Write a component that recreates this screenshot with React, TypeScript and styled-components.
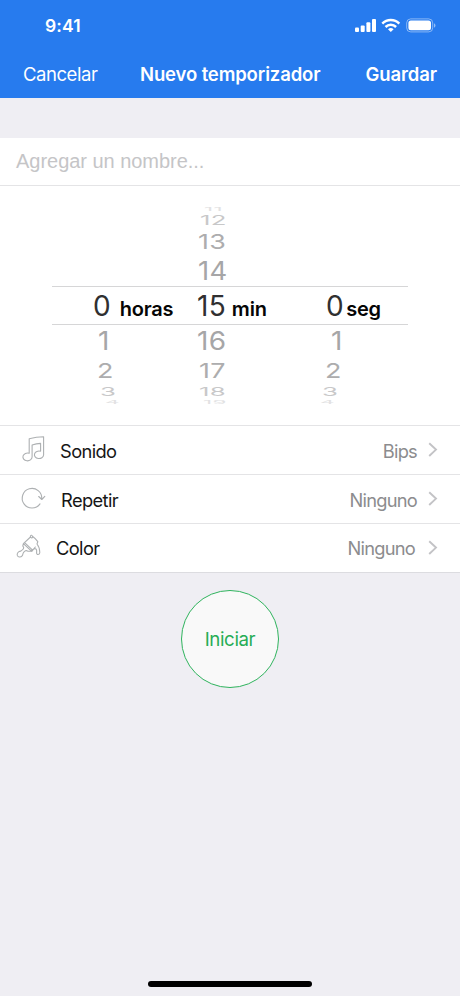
import React from "react";
import styled, { createGlobalStyle } from "styled-components";

const GlobalStyle = createGlobalStyle`
  * { box-sizing: border-box; }
  body { margin: 0; background: #efeef3; font-family: Inter, "Liberation Sans", sans-serif; }
`;

const Screen = styled.main`
  width: 460px;
  height: 996px;
  overflow: hidden;
  display: flex;
  flex-direction: column;
  background: #efeef3;
`;

const Header = styled.header`
  height: 98px;
  background: #277bee;
  color: #fff;
`;

const StatusBar = styled.div`
  height: 50px;
  padding: 1px 24px 0 45px;
  display: flex;
  align-items: center;
  justify-content: space-between;
`;

const Clock = styled.span`
  font-size: 17.5px;
  font-weight: 600;
  letter-spacing: 0.15px;
`;

const NavBar = styled.nav`
  height: 48px;
  padding: 0 23px;
  display: grid;
  grid-template-columns: 117px 1fr auto;
  align-items: center;
`;

const NavText = styled.span<{ $strong?: boolean; $tracking: number }>`
  font-size: 18.5px;
  line-height: 46px;
  padding-bottom: 1px;
  font-weight: ${(p) => (p.$strong ? 600 : 400)};
  letter-spacing: ${(p) => p.$tracking}px;
  white-space: nowrap;
`;

const NameField = styled.div`
  height: 48px;
  margin-top: 40px;
  padding-left: 16px;
  background: #fff;
  border-bottom: 1px solid #e4e4e6;
  color: #c5c5c7;
  font: 20px/47px "Liberation Sans", sans-serif;
  letter-spacing: -0.03px;
`;

const Picker = styled.section`
  height: 239px;
  padding: 21px 52px 0;
  background: #fff;
  display: grid;
  grid-template-columns: 126px 126px 104px;
  grid-template-rows: 197px;
`;

const Wheel = styled.div<{ $upper: boolean }>`
  height: 197px;
  padding-top: ${(p) => (p.$upper ? 0 : 79)}px;
`;

const Notch = styled.div<{ $height: number; $left: number; $selected: boolean; $color: string }>`
  height: ${(p) => p.$height}px;
  padding: ${(p) => (p.$selected ? 1 : 0)}px 0 0 ${(p) => p.$left}px;
  display: flex;
  align-items: center;
  color: ${(p) => p.$color};
  border: 0 solid #d6d6d7;
  border-width: ${(p) => (p.$selected ? "1px 0" : "0")};
`;

const Digits = styled.span<{ $squash: number; $stretch: number }>`
  font-size: 28px;
  font-weight: 400;
  line-height: 1;
  letter-spacing: 0.4px;
  margin-right: -0.4px;
  transform: scale(${(p) => p.$stretch}, ${(p) => p.$squash});
  transform-origin: left center;
`;

const Unit = styled.span<{ $gap: number }>`
  margin-left: ${(p) => p.$gap}px;
  padding-top: 5px;
  color: #050505;
  font-size: 20px;
  line-height: 1;
  font-weight: 600;
  letter-spacing: -0.2px;
`;

const Settings = styled.section`
  height: 148px;
  background: #fff;
  border-bottom: 1px solid #dcdce0;
`;

const SettingRow = styled.div`
  height: 49px;
  display: flex;
  align-items: center;
  padding-right: 21px;
  border-top: 1px solid #e4e4e6;

  &:last-child {
    height: 48px;
  }
`;

const IconSlot = styled.span<{ $width: number }>`
  width: ${(p) => p.$width}px;
  padding-left: 16px;
  display: flex;
`;

const SettingName = styled.span`
  flex: 1;
  padding-top: 1px;
  font-size: 18.3px;
  letter-spacing: -0.6px;
  color: #161616;
`;

const SettingValue = styled.span<{ $gap: number }>`
  margin-right: ${(p) => p.$gap}px;
  padding-top: 1px;
  font-size: 18.3px;
  letter-spacing: -0.75px;
  color: #8c8c8e;
`;

const StartButton = styled.button`
  width: 98px;
  height: 98px;
  margin: 17px auto 0;
  padding: 2px 0 0;
  border: 1.5px solid #2fb35d;
  border-radius: 50%;
  background: #f9f9f9;
  color: #27ad55;
  font: 400 18.7px/1 Inter, sans-serif;
  letter-spacing: -0.4px;
`;

const HomeIndicator = styled.div`
  width: 164px;
  height: 6px;
  margin: auto auto 9px;
  border-radius: 3px;
  background: #000;
`;

const StatusIcons = () => (
  <svg width="82" height="16" viewBox="0 0 82 16" fill="none">
    <g fill="#fff">
      <rect x="1" y="9.6" width="4" height="4.4" rx="1" />
      <rect x="6.7" y="7.4" width="4" height="6.6" rx="1" />
      <rect x="12.4" y="4.2" width="4" height="9.8" rx="1" />
      <rect x="18" y="1" width="4" height="13" rx="1" />
    </g>
    <g stroke="#fff" strokeWidth="2.5">
      <path d="M28.3 5.6a12 12 0 0 1 17 0" />
      <path d="M31.5 9a7.5 7.5 0 0 1 10.6 0" />
    </g>
    <path d="M34 11.2a4.1 4.1 0 0 1 5.6 0L36.8 14Z" fill="#fff" />
    <rect x="52.7" y=".9" width="26" height="13" rx="4" stroke="#fff" strokeOpacity=".45" />
    <rect x="54.4" y="2.6" width="22.6" height="9.6" rx="2.5" fill="#fff" />
    <path d="M80 5.3c2 .8 2 3.6 0 4.4Z" fill="#fff" fillOpacity=".5" />
  </svg>
);

const iconProps = {
  width: 30,
  height: 30,
  viewBox: "0 0 30 30",
  fill: "none",
  stroke: "#adb0b2",
  strokeWidth: 1.1,
  strokeLinecap: "round" as const,
  strokeLinejoin: "round" as const,
};

const MusicIcon = () => (
  <svg {...iconProps}>
    <path d="M13.2 3.7Q20.5 2 27.6 1.8V20a4.6 3.8 0 1 1-3-3.8V8.4q-4.3.3-8.5 1.7V22a4.6 3.9 0 1 1-2.9-3.7Z" />
  </svg>
);

const RepeatIcon = () => (
  <svg {...iconProps}>
    <path d="M24 19.9a9.8 9.8 0 1 1 1.8-5.1M22.7 12.5l3.1 3 3-3.2" />
  </svg>
);

const BrushIcon = () => (
  <svg {...iconProps}>
    <path d="M7.4 10.6 14.5 4c.8 1.5 3.2.7 1.7-1.2-.7-1.2-2.3-.3-1.7 1.2M16.4 3.2c2.2 1.4 3.9 3.5 5.4 5.5L21 11c1.7 2 2.7 5.6 2.8 8.6 0 2.5-3.3 2.6-3.2.2.2-2 .2-4.3-1.8-4.2-1.6 0-2 1.8-3.4 1.7M7.4 10.6l8.4 7.7 3.5-4.3M7.4 10.6 6.8 13c2.2 1.9.1 3.5-2 5.1-2.3.1-4.2 2.2-3.5 4.3.8 2 3.4 2.2 4.8.5.9-1 .6-2.2 1.3-3.2 1.4-1.7 2.9-2.8 4.2-1.5l4.2.1M8.6 9.6l8 7.5" />
  </svg>
);

const Chevron = () => (
  <svg width="12" height="16" viewBox="0 0 12 16" fill="none" stroke="#c3c3c6" strokeWidth="1.9">
    <path d="m2.2 1.2 6.8 6.4-6.8 6.4" />
  </svg>
);

interface Step {
  value: number;
  height: number;
  squash: number;
  stretch: number;
  color: string;
  left: number;
}

const drum = [
  { offset: -4, height: 4, squash: 0.18, stretch: 0.8, color: "#e2e2e3" },
  { offset: -3, height: 17, squash: 0.46, stretch: 0.92, color: "#c8c8c9" },
  { offset: -2, height: 27, squash: 0.74, stretch: 0.96, color: "#adadae" },
  { offset: -1, height: 31, squash: 0.9, stretch: 0.98, color: "#a6a6a7" },
  { offset: 0, height: 39, squash: 1, stretch: 1, color: "#303031" },
  { offset: 1, height: 32, squash: 0.92, stretch: 1, color: "#a6a6a7" },
  { offset: 2, height: 27, squash: 0.74, stretch: 0.96, color: "#adadae" },
  { offset: 3, height: 16, squash: 0.44, stretch: 0.92, color: "#c8c8c9" },
  { offset: 4, height: 4, squash: 0.18, stretch: 0.8, color: "#e2e2e3" },
];

interface Dial {
  value: number;
  unit: string;
  gap: number;
  lefts: number[];
}

const dials: Dial[] = [
  { value: 0, unit: "horas", gap: 9, lefts: [0, 0, 0, 0, 41, 46, 45, 48, 53] },
  { value: 15, unit: "min", gap: 6, lefts: [26, 22, 20, 20, 19, 19, 21, 21, 25] },
  { value: 0, unit: "seg", gap: 2.5, lefts: [0, 0, 0, 0, 22, 27, 21, 18, 16] },
];

const stepsOf = (dial: Dial): Step[] =>
  drum
    .map((slot, i) => ({ ...slot, value: dial.value + slot.offset, left: dial.lefts[i] }))
    .filter((step) => step.value >= 0);

const settings = [
  { name: "Sonido", value: "Bips", icon: <MusicIcon />, slot: 60, gap: 10 },
  { name: "Repetir", value: "Ninguno", icon: <RepeatIcon />, slot: 61, gap: 10 },
  { name: "Color", value: "Ninguno", icon: <BrushIcon />, slot: 56, gap: 12 },
];

export default function App() {
  return (
    <Screen>
      <GlobalStyle />
      <Header>
        <StatusBar>
          <Clock>9:41</Clock>
          <StatusIcons />
        </StatusBar>
        <NavBar>
          <NavText $tracking={-0.45}>Cancelar</NavText>
          <NavText $strong $tracking={-0.13}>Nuevo temporizador</NavText>
          <NavText $strong $tracking={-0.1}>Guardar</NavText>
        </NavBar>
      </Header>
      <NameField>Agregar un nombre...</NameField>
      <Picker>
        {dials.map((dial) => (
          <Wheel key={dial.unit} $upper={dial.value > 0}>
            {stepsOf(dial).map((step) => {
              const selected = step.value === dial.value;
              return (
                <Notch key={step.value} $height={step.height} $left={step.left} $selected={selected} $color={step.color}>
                  <Digits $squash={step.squash} $stretch={step.stretch}>{step.value}</Digits>
                  {selected && <Unit $gap={dial.gap}>{dial.unit}</Unit>}
                </Notch>
              );
            })}
          </Wheel>
        ))}
      </Picker>
      <Settings>
        {settings.map((item) => (
          <SettingRow key={item.name}>
            <IconSlot $width={item.slot}>{item.icon}</IconSlot>
            <SettingName>{item.name}</SettingName>
            <SettingValue $gap={item.gap}>{item.value}</SettingValue>
            <Chevron />
          </SettingRow>
        ))}
      </Settings>
      <StartButton>Iniciar</StartButton>
      <HomeIndicator />
    </Screen>
  );
}
